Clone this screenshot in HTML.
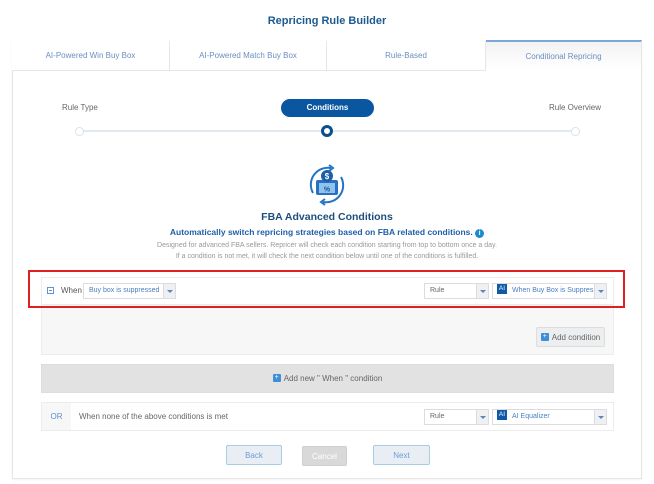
<!DOCTYPE html>
<html><head><style>
*{box-sizing:border-box;margin:0;padding:0}
body{width:654px;height:484px;background:#fff;font-family:"Liberation Sans",sans-serif;position:relative;overflow:hidden;font-size:8px;color:#555}
.a{position:absolute}
.title{left:0;width:654px;top:15px;text-align:center;font-weight:bold;font-size:11px;color:#1d5a8e}
.card{left:12px;top:41px;width:630px;height:438px;border:1px solid #e6e6e6;background:#fff;box-shadow:0 1px 2px rgba(0,0,0,.05)}
.tab{top:41px;height:30px;line-height:30px;text-align:center;color:#6a8fc0;font-size:8px;border-right:1px solid #e6e6e6;border-bottom:1px solid #e6e6e6;background:#fff}
.sel{height:16px;border:1px solid #dcdcdc;background:#fff;font-size:7px;line-height:14px;padding-left:5px;color:#4a7fc1;overflow:hidden;white-space:nowrap}
.sel .ar{position:absolute;right:0;top:0;width:12px;height:14px;background:#eef0f3;border-left:1px solid #dcdcdc}
.sel .ar:after{content:"";position:absolute;left:3px;top:6px;border:3px solid transparent;border-top:3px solid #5a86bd}
.ai{display:inline-block;width:10px;height:10px;background:#0d5aa7;color:#fff;font-size:6.5px;line-height:10px;text-align:center;margin-right:5px;vertical-align:middle;margin-top:-2px}
.btn{height:20px;line-height:20px;text-align:center;font-size:8px;color:#6a9fd6;background:#e8eef3;border:1px solid #a8cbe6;border-radius:2px}
.plus{display:inline-block;width:8px;height:8px;background:#3e8fd8;border-radius:1px;color:#fff;font-size:7px;line-height:8px;text-align:center;margin-right:3px;vertical-align:middle;margin-top:-2px}
</style></head><body>
<div class="a title">Repricing Rule Builder</div>
<div class="a card"></div>
<div class="a tab" style="left:12px;width:158px">AI-Powered Win Buy Box</div>
<div class="a tab" style="left:170px;width:157px">AI-Powered Match Buy Box</div>
<div class="a tab" style="left:327px;width:159px">Rule-Based</div>
<div class="a tab" style="left:486px;width:156px;border-top:2px solid #7aa7dc;background:linear-gradient(#f3f3f3,#fff);top:40px;height:31px;border-bottom:none">Conditional Repricing</div>

<div class="a" style="left:62px;top:103px;font-size:8px;color:#666">Rule Type</div>
<div class="a" style="left:281px;top:99px;width:93px;height:18px;border-radius:9px;background:#0a56a0;color:#fff;font-weight:bold;text-align:center;line-height:18px;font-size:8px">Conditions</div>
<div class="a" style="left:549px;top:103px;font-size:8px;color:#666">Rule Overview</div>
<div class="a" style="left:79px;top:130px;width:496px;height:2px;background:#e3e8ec"></div>
<div class="a" style="left:75px;top:127px;width:9px;height:9px;border:1.5px solid #d9e3e8;border-radius:50%;background:#fff"></div>
<div class="a" style="left:571px;top:127px;width:9px;height:9px;border:1.5px solid #d9e3e8;border-radius:50%;background:#fff"></div>
<div class="a" style="left:321px;top:125px;width:12px;height:12px;border:3px solid #0a4f8f;border-radius:50%;background:#fff"></div>

<svg class="a" style="left:305px;top:163px" width="44" height="44" viewBox="0 0 44 44">
<path d="M8 30 A17 17 0 0 1 26 5" fill="none" stroke="#2474c4" stroke-width="2"/>
<path d="M36 14 A17 17 0 0 1 18 39" fill="none" stroke="#2474c4" stroke-width="2"/>
<path d="M24 2 L28 5 L24 8" fill="none" stroke="#2474c4" stroke-width="2"/>
<path d="M20 36 L16 39 L20 42" fill="none" stroke="#2474c4" stroke-width="2"/>
<rect x="11" y="17" width="22" height="15" rx="2" fill="#2b6fc0"/>
<rect x="14" y="20" width="16" height="10" fill="#8ec3ef"/>
<text x="22" y="28.5" font-size="7" text-anchor="middle" fill="#1d4f8f" font-family="Liberation Sans" font-weight="bold">%</text>
<circle cx="22" cy="13" r="6" fill="#1d5fa8"/>
<text x="22" y="16" font-size="8" text-anchor="middle" fill="#fff" font-family="Liberation Sans" font-weight="bold">$</text>
</svg>
<div class="a" style="left:0;width:654px;top:211px;text-align:center;font-weight:bold;font-size:10.5px;color:#1d4f7e">FBA Advanced Conditions</div>
<div class="a" style="left:0;width:654px;top:227px;text-align:center;font-weight:bold;font-size:8.5px;color:#1f5fa8">Automatically switch repricing strategies based on FBA related conditions. <span style="display:inline-block;width:9px;height:9px;border-radius:50%;background:#1a8bd0;color:#fff;font-size:7px;line-height:9px">i</span></div>
<div class="a" style="left:0;width:654px;top:241px;text-align:center;font-size:7px;color:#999;line-height:10.5px">Designed for advanced FBA sellers. Repricer will check each condition starting from top to bottom once a day.<br>If a condition is not met, it will check the next condition below until one of the conditions is fulfilled.</div>

<div class="a" style="left:41px;top:277px;width:573px;height:78px;background:#f7f7f7;border:1px solid #ececec"></div>
<div class="a" style="left:41px;top:277px;width:573px;height:28px;background:#fff;border:1px solid #ececec"></div>
<div class="a" style="left:47px;top:287px;width:7px;height:7px;border:1px solid #5a96d6"><div style="position:absolute;left:1px;top:2px;width:3px;height:1px;background:#5a96d6"></div></div>
<div class="a" style="left:61px;top:286px;color:#555">When</div>
<div class="a sel" style="left:83px;top:283px;width:93px">Buy box is suppressed<span class="ar"></span></div>
<div class="a sel" style="left:424px;top:283px;width:65px;color:#666">Rule<span class="ar"></span></div>
<div class="a sel" style="left:492px;top:283px;width:115px;padding-left:4px"><span class="ai">AI</span>When Buy Box is Suppres<span class="ar"></span></div>
<div class="a" style="left:28px;top:270px;width:597px;height:38px;border:2px solid #e02020"></div>
<div class="a btn" style="left:536px;top:327px;width:69px;color:#666;background:#eceeef;border-color:#ddd"><span class="plus">+</span>Add condition</div>

<div class="a" style="left:41px;top:364px;width:573px;height:29px;background:#e2e2e2;border:1px solid #ddd;text-align:center;line-height:28px;color:#666"><span class="plus">+</span>Add new " When " condition</div>

<div class="a" style="left:41px;top:402px;width:573px;height:29px;background:#fff;border:1px solid #ececec"></div>
<div class="a" style="left:42px;top:403px;width:29px;height:27px;background:#f7f7f7;color:#5a8fd0;text-align:center;line-height:27px">OR</div>
<div class="a" style="left:79px;top:412px;color:#666">When none of the above conditions is met</div>
<div class="a sel" style="left:424px;top:409px;width:65px;color:#666">Rule<span class="ar"></span></div>
<div class="a sel" style="left:492px;top:409px;width:115px;padding-left:4px"><span class="ai">AI</span>AI Equalizer<span class="ar"></span></div>

<div class="a btn" style="left:226px;top:445px;width:56px">Back</div>
<div class="a btn" style="left:302px;top:446px;width:45px;background:#d9d9d9;border-color:#d0d0d0;color:#fff">Cancel</div>
<div class="a btn" style="left:373px;top:445px;width:57px">Next</div>
</body></html>
